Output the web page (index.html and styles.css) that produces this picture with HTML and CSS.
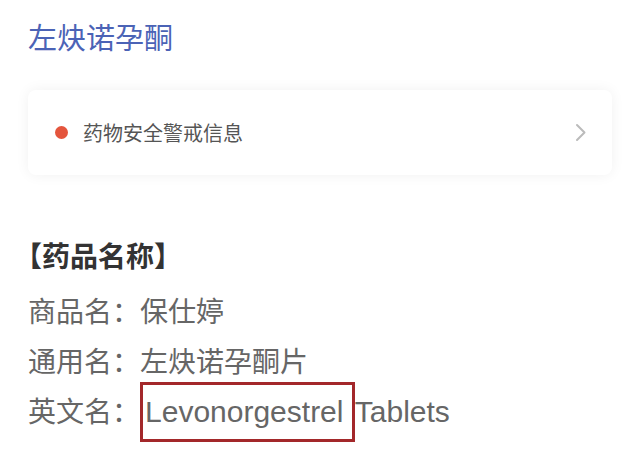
FILE: index.html
```html
<!DOCTYPE html>
<html lang="zh-CN">
<head>
  <meta charset="UTF-8">
  <meta name="viewport" content="width=device-width, initial-scale=1.0">
  <title>左炔诺孕酮</title>
  <link rel="stylesheet" href="styles.css">
</head>
<body>
  <div id="page">
    <h1 class="drug-title">左炔诺孕酮</h1>

    <!-- Scheda avvertenze -->
    <div class="alert-card">
      <span class="alert-dot"></span>
      <span class="alert-text">药物安全警戒信息</span>
      <svg class="chevron" width="12" height="19" viewBox="0 0 12 19">
        <polyline points="2,2 9.5,9.5 2,17" fill="none" stroke="#bbbbbb" stroke-width="2" stroke-linecap="round" stroke-linejoin="round"/>
      </svg>
    </div>

    <h2 class="section-title">【药品名称】</h2>
    <p class="info-line">商品名：保仕婷</p>
    <p class="info-line">通用名：左炔诺孕酮片</p>
    <p class="info-line">英文名：<span class="en"><span class="marked">Levonorgestrel&nbsp;</span>Tablets</span></p>
  </div>
</body>
</html>
```

FILE: styles.css
```css
body {
  margin: 0;
  padding: 0;
  background-color: #ffffff;
  font-family: "Noto Sans CJK SC", "Liberation Sans", sans-serif;
  color: #666666;
}

#page {
  padding: 16px 28px 18px 28px;
}

.drug-title {
  margin: 0;
  font-size: 29px;
  font-weight: normal;
  line-height: 40px;
  color: #4b63b6;
}

.alert-card {
  display: flex;
  align-items: center;
  height: 85px;
  margin-top: 34px;
  padding: 0 25px 0 27px;
  background-color: #ffffff;
  border-radius: 8px;
  box-shadow: 0 0 14px rgba(0, 0, 0, 0.06);
}

.alert-dot {
  width: 13px;
  height: 13px;
  border-radius: 50%;
  background-color: #e4553d;
  margin-right: 15px;
}

.alert-text {
  flex: 1;
  font-size: 20px;
  color: #555555;
}

.section-title {
  margin: 60px 0 0 -14px;
  font-size: 28px;
  line-height: 40px;
  font-weight: bold;
  color: #333333;
}

.info-line {
  margin: 0;
  font-size: 28px;
  line-height: 50px;
  color: #666666;
}

.section-title + .info-line {
  margin-top: 10px;
}

.en {
  font-family: "Liberation Sans", sans-serif;
  font-size: 30px;
}

/* riquadro rosso attorno al nome inglese */
.marked {
  display: inline-block;
  line-height: 54px;
  margin: -5px 0;
  padding-left: 2px;
  border: 3px solid #a3282a;
}
```
